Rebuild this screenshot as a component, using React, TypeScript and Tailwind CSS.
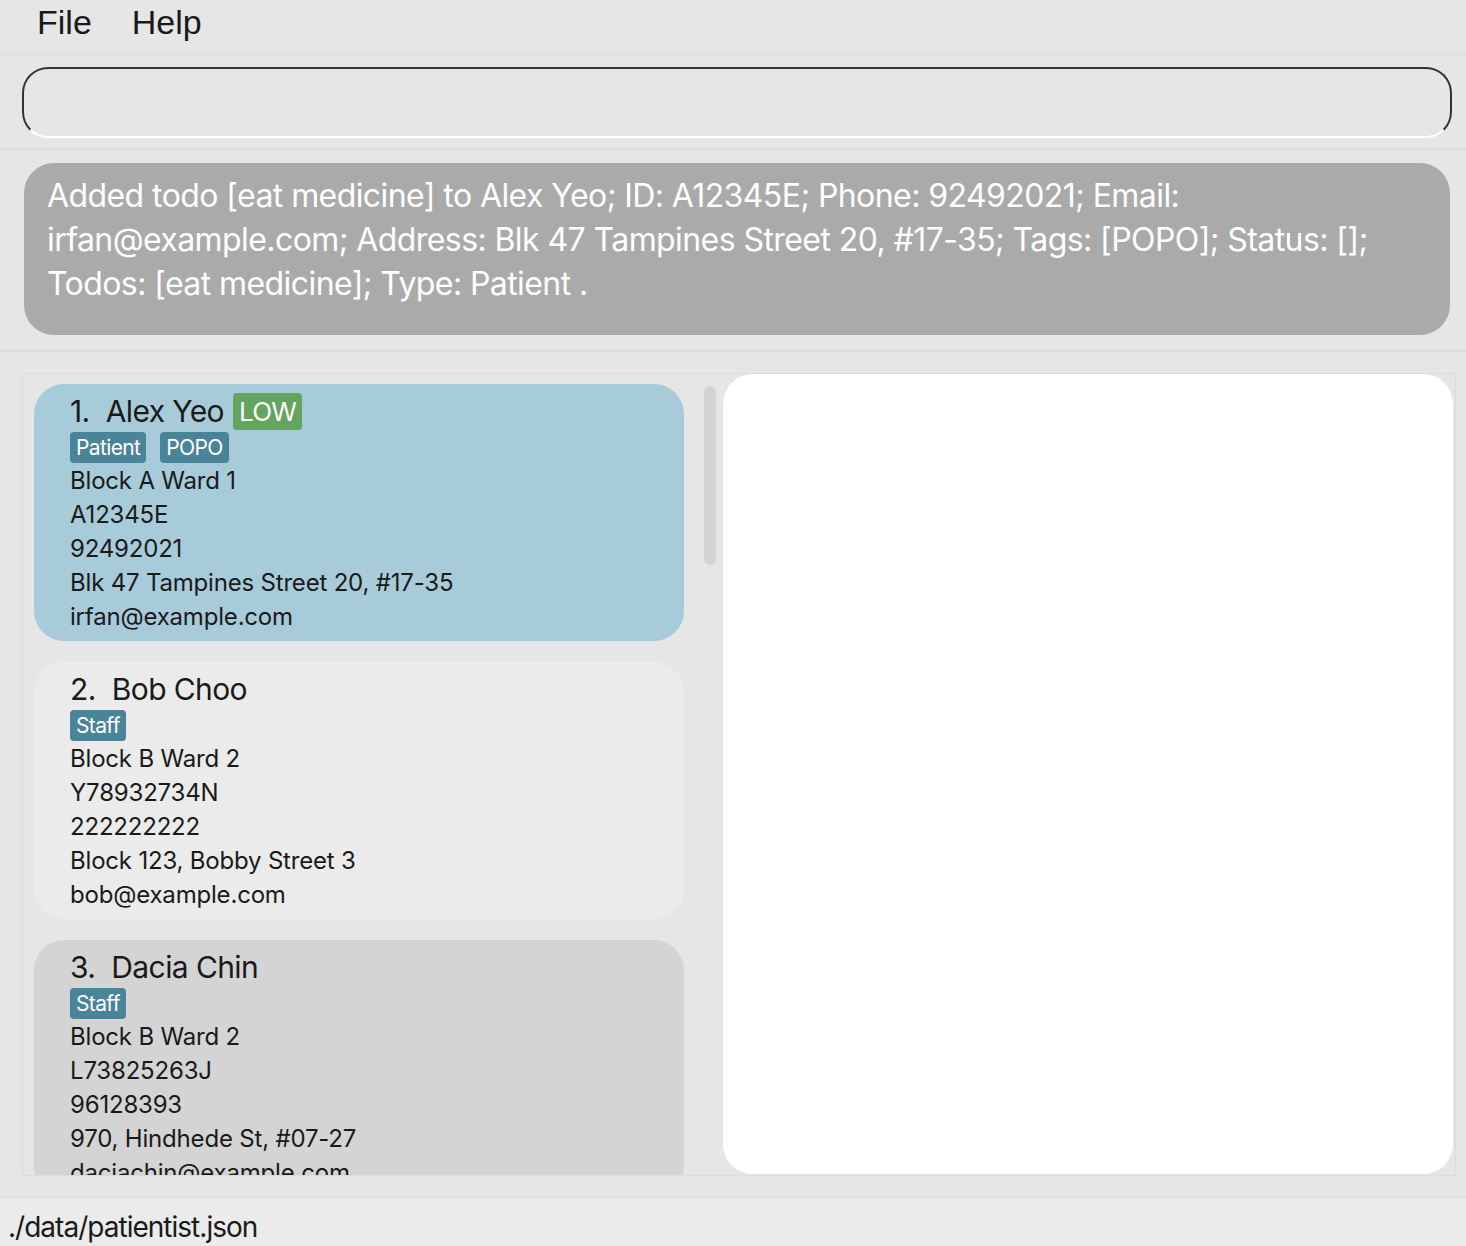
const persons = [
  {
    name: "Alex Yeo",
    priority: "LOW",
    tags: ["Patient", "POPO"],
    ward: "Block A Ward 1",
    id: "A12345E",
    phone: "92492021",
    address: "Blk 47 Tampines Street 20, #17-35",
    email: "irfan@example.com",
    bg: "bg-[#a7cbd9]",
  },
  {
    name: "Bob Choo",
    priority: "",
    tags: ["Staff"],
    ward: "Block B Ward 2",
    id: "Y78932734N",
    phone: "222222222",
    address: "Block 123, Bobby Street 3",
    email: "bob@example.com",
    bg: "bg-[#ebebeb]",
  },
  {
    name: "Dacia Chin",
    priority: "",
    tags: ["Staff"],
    ward: "Block B Ward 2",
    id: "L73825263J",
    phone: "96128393",
    address: "970, Hindhede St, #07-27",
    email: "daciachin@example.com",
    bg: "bg-[#d4d4d4]",
  },
];

const font = { fontFamily: "Inter, 'Noto Sans', sans-serif" };

function PersonCard({ p, index }: { p: (typeof persons)[number]; index: number }) {
  return (
    <div className={`${p.bg} rounded-[30px] h-[257px] shrink-0 pl-[36px] pt-[9px] text-[#1a1a1a]`}>
      <div className="flex items-center h-[37px] text-[30px] tracking-[-0.02em]">
        <span>{index + 1}.</span>
        <span className="ml-[16px]">{p.name}</span>
        {p.priority && (
          <span className="ml-[9px] h-[37px] px-[6px] flex items-center rounded-[4px] bg-[#63a45f] text-white text-[26px] tracking-[-0.03em]">
            {p.priority}
          </span>
        )}
      </div>
      <div className="flex gap-[14px] mt-[2px]">
        {p.tags.map((t) => (
          <span key={t} className="h-[31px] px-[6px] flex items-center rounded-[4px] bg-[#4a8499] text-white text-[21px] tracking-[-0.03em]">
            {t}
          </span>
        ))}
      </div>
      <div className="text-[24px] leading-[34px] tracking-[-0.008em] pt-[1px]">
        <div>{p.ward}</div>
        <div>{p.id}</div>
        <div>{p.phone}</div>
        <div>{p.address}</div>
        <div>{p.email}</div>
      </div>
    </div>
  );
}

export default function App() {
  return (
    <div className="w-[1466px] h-[1246px] bg-[#e6e6e6] flex flex-col overflow-hidden" style={font}>
      {/* menu bar */}
      <div className="h-[54px] shrink-0 flex items-start pt-[2px] text-[34px] leading-[40px] text-[#1a1a1a]" style={{ fontFamily: "'Liberation Sans', Arial, sans-serif" }}>
        <span className="ml-[37px]">File</span>
        <span className="ml-[40px]">Help</span>
      </div>

      {/* command box */}
      <div className="h-[94px] shrink-0 border-t border-[#dedede] pt-[12px] pl-[22px] pr-[14px]">
        <div className="h-[71px] rounded-[26px] border-2 border-[#333333] border-b-white" />
      </div>

      {/* result display */}
      <div className="h-[202px] shrink-0 border-t-2 border-[#dedede] pt-[13px] pl-[24px] pr-[16px]">
        <div className="h-[172px] rounded-[30px] bg-[#aaaaaa] text-white text-[32px] leading-[44px] tracking-[-0.018em] pl-[23px] pt-[11px]">
          <div>Added todo [eat medicine] to Alex Yeo; ID: A12345E; Phone: 92492021; Email:</div>
          <div>irfan@example.com; Address: Blk 47 Tampines Street 20, #17-35; Tags: [POPO]; Status: [];</div>
          <div>Todos: [eat medicine]; Type: Patient .</div>
        </div>
      </div>

      {/* list + detail */}
      <div className="flex-1 border-t-2 border-[#dedede] pt-[21px] pb-[20px] pl-[22px] pr-[10px] min-h-0">
        <div className="h-full border border-[#dcdcdc] flex min-h-0">
          <div className="w-[700px] shrink-0 flex pl-[11px] pt-[10px] min-h-0 overflow-hidden">
            <div className="w-[650px] flex flex-col gap-[21px]">
              {persons.map((p, i) => (
                <PersonCard key={p.name} p={p} index={i} />
              ))}
            </div>
            <div className="ml-[20px] mt-[2px] w-[12px] h-[179px] rounded-full bg-[#d3d3d3]" />
          </div>
          <div className="flex-1 bg-white rounded-[30px] mr-[2px] mb-[1px]" />
        </div>
      </div>

      {/* status bar */}
      <div className="h-[50px] shrink-0 border-t-2 border-[#dedede] bg-[#ebebeb] flex items-start pt-[12px] pl-[8px] text-[28px] leading-[34px] tracking-[-0.035em] text-[#1a1a1a]">
        ./data/patientist.json
      </div>
    </div>
  );
}
